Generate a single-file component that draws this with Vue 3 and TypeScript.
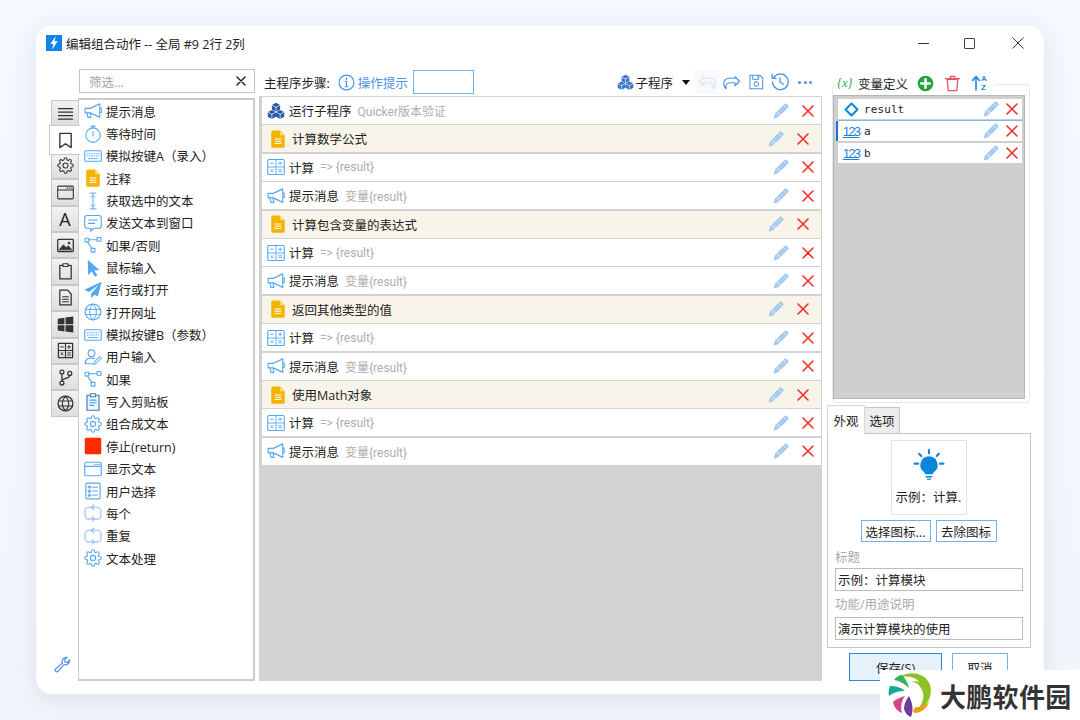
<script setup lang="ts">
import { h } from 'vue'

type P = [string, string?, string?, number?]
const CUR = 'currentColor'
const gear = 'M19.4 15a1.65 1.65 0 0 0 .33 1.82l.06.06a2 2 0 0 1 0 2.83 2 2 0 0 1-2.83 0l-.06-.06a1.65 1.65 0 0 0-1.82-.33 1.65 1.65 0 0 0-1 1.51V21a2 2 0 0 1-2 2 2 2 0 0 1-2-2v-.09A1.65 1.65 0 0 0 9 19.4a1.65 1.65 0 0 0-1.82.33l-.06.06a2 2 0 0 1-2.83 0 2 2 0 0 1 0-2.83l.06-.06a1.65 1.65 0 0 0 .33-1.82 1.65 1.65 0 0 0-1.51-1H3a2 2 0 0 1-2-2 2 2 0 0 1 2-2h.09A1.65 1.65 0 0 0 4.6 9a1.65 1.65 0 0 0-.33-1.82l-.06-.06a2 2 0 0 1 0-2.83 2 2 0 0 1 2.83 0l.06.06a1.65 1.65 0 0 0 1.82.33H9a1.65 1.65 0 0 0 1-1.51V3a2 2 0 0 1 2-2 2 2 0 0 1 2 2v.09a1.65 1.65 0 0 0 1 1.51 1.65 1.65 0 0 0 1.82-.33l.06-.06a2 2 0 0 1 2.83 0 2 2 0 0 1 0 2.83l-.06.06a1.65 1.65 0 0 0-.33 1.82V9a1.65 1.65 0 0 0 1.51 1H21a2 2 0 0 1 2 2 2 2 0 0 1-2 2h-.09a1.65 1.65 0 0 0-1.51 1z'
const icons: Record<string, P[]> = {
  megaphone: [['M1.5 8.5h7L21 2.5v18L8.5 14.5h-7z'], ['M4 14.5l1.2 6h4l-1-5.5'], ['M21 8h2v6h-2']],
  timer: [['M12 13.5m-9.6 0a9.6 9.6 0 1 0 19.2 0a9.6 9.6 0 1 0-19.2 0z'], ['M12 9v5.5'], ['M9.5 1.5h5'], ['M12 1.5v2.5']],
  keyboard: [['M2.5 5h19a1.5 1.5 0 0 1 1.5 1.5v11a1.5 1.5 0 0 1-1.5 1.5h-19A1.5 1.5 0 0 1 1 17.5v-11A1.5 1.5 0 0 1 2.5 5z'], ['M4 9h1M7 9h1M10 9h1M13 9h1M16 9h1M19 9h1M4.5 12h1M7.5 12h1M10.5 12h1M13.5 12h1M16.5 12h1M19.5 12h.5M6 15.5h12', CUR, 'none', 1.2]],
  note: [['M5 0.5h10l6 6.5v15a1.5 1.5 0 0 1-1.5 1.5h-15A1.5 1.5 0 0 1 3 22V2.5a2 2 0 0 1 2-2z', 'none', '#f5b301'], ['M15 0.5l6 6.5h-6z', 'none', '#fbdc86'], ['M8 12h8M8 15h8M8 18h8', '#fff', 'none', 1.4]],
  ibeam: [['M8 1.5h8M8 22.5h8M12 2v20M9.5 7L12 4.5 14.5 7M9.5 17l2.5 2.5 2.5-2.5', CUR, 'none', 1.3]],
  chat: [['M4 2h16a3 3 0 0 1 3 3v11a3 3 0 0 1-3 3h-7l-4 4v-4H4a3 3 0 0 1-3-3V5a3 3 0 0 1 3-3z'], ['M6 8h12M6 12.5h8']],
  branch: [['M1.5 3h5v5h-5zM17.5 2h5v5h-5zM9.5 16.5h5v5h-5z'], ['M6.5 5h11M4.5 8l6 8.5']],
  cursor: [['M5 1l15.5 13.5-7 .8 4.5 6.5-3.5 1.7-4-7-5 4.8z', 'none', CUR]],
  plane: [['M23.5 1L.5 11.5l6 3.2L20 5 9.5 16.5V23l4.2-4.8 4.8 2.3z', 'none', CUR]],
  globe: [['M12 1.5a10.5 10.5 0 1 0 0 21 10.5 10.5 0 0 0 0-21z'], ['M12 1.5c-6 6-6 15 0 21M12 1.5c6 6 6 15 0 21M2 8.5h20M2 15.5h20', CUR, 'none', 1.3]],
  user: [['M10 2.5a4.5 4.5 0 1 0 0 9 4.5 4.5 0 0 0 0-9z'], ['M1.5 21c0-5 3-7.5 8-7.5 1.5 0 3 .3 4 .8M1.5 21h10'], ['M13 21.5l1-3.5 7-7 2.5 2.5-7 7z', CUR, '#cfe5fa', 1.2]],
  clip: [['M4 3h16v20H4z', '#3f78b5', '#eef6fd', 1.5], ['M8.5 1h7v4h-7z', '#3f78b5', '#fff', 1.4], ['M8 9.5h8M8 13h8M8 16.5h5', '#4aa3ee', 'none', 1.6]],
  gear: [[gear, CUR, 'none', 1.5], ['M15.5 12a3.5 3.5 0 1 1-7 0 3.5 3.5 0 0 1 7 0z', CUR, 'none', 1.5]],
  stop: [['M3 1h18a2 2 0 0 1 2 2v18a2 2 0 0 1-2 2H3a2 2 0 0 1-2-2V3a2 2 0 0 1 2-2z', 'none', '#ff2a00']],
  window: [['M2.5 3h19A1.5 1.5 0 0 1 23 4.5v15a1.5 1.5 0 0 1-1.5 1.5h-19A1.5 1.5 0 0 1 1 19.5v-15A1.5 1.5 0 0 1 2.5 3z'], ['M1 8.5h22'], ['M14 5.8h1M17 5.8h1M20 5.8h1', CUR, 'none', 1.4]],
  choice: [['M4 1.5h16a1.5 1.5 0 0 1 1.5 1.5v18a1.5 1.5 0 0 1-1.5 1.5H4A1.5 1.5 0 0 1 2.5 21V3A1.5 1.5 0 0 1 4 1.5z'], ['M6 5.5h2.5v2.5H6zM6 11h2.5v2.5H6zM6 16.5h2.5V19H6z', CUR, CUR, 1], ['M11 7h7M11 12h7M11 17.5h7', CUR, 'none', 1.3]],
  loop: [['M9 4.5H6a4.5 4.5 0 0 0-4.5 4.5v6.5A4.5 4.5 0 0 0 6 20h7', CUR, 'none', 2.4], ['M15 20h3a4.5 4.5 0 0 0 4.5-4.5V9A4.5 4.5 0 0 0 18 4.5h-7', CUR, 'none', 2.4], ['M13 1.5l-3 3 3 3M11 17l3 3-3 3', '#7fb4ea', 'none', 1.4]],
  calc: [['M2.5 2h19A1.5 1.5 0 0 1 23 3.5v17a1.5 1.5 0 0 1-1.5 1.5h-19A1.5 1.5 0 0 1 1 20.5v-17A1.5 1.5 0 0 1 2.5 2z'], ['M1 12h22M12 2v20', CUR, 'none', 1.2], ['M4.5 7h4M15.5 7h4M17.5 5v4M5 15.5l3 3M8 15.5l-3 3M15.5 15.7h4M15.5 18.3h4', CUR, 'none', 1.2]],
  cubes: [['M12 1l5.5 3v6L12 13 6.5 10V4z', 'none', CUR], ['M6.5 10.5L12 13.5v6L6.5 22.5 1 19.5v-6z', 'none', CUR], ['M17.5 10.5l5.5 3v6l-5.5 3-5.5-3v-6z', 'none', CUR], ['M6.5 4.2L12 7.2l5.5-3M12 7.2v5.5M1 13.5l5.5 3 5.5-3M6.5 16.5v6M12 13.5l5.5 3 5.5-3M17.5 16.5v6', '#fff', 'none', .9]],
  pencil: [['M2 22l1.8-6.3L17.8 1.8a1.6 1.6 0 0 1 2.3 0l2.1 2.1a1.6 1.6 0 0 1 0 2.3L8.3 20.2z', '#7fb4ea', '#a9cef3', 1], ['M5 14.5l4.5 4.5M7 13l4.5 4.5M16 3.5l4.5 4.5', '#e6f1fc', 'none', 1]],
  cross: [['M2 2l20 20M22 2L2 22', '#f12f28', 'none', 3.2]],
  menu: [['M2 5h20M2 10h20M2 15h20M2 20h20', CUR, 'none', 1.8]],
  bookmark: [['M4 2h16v20l-8-5.5L4 22z', CUR, 'none', 1.9]],
  image: [['M2 3.5h20a1 1 0 0 1 1 1v15a1 1 0 0 1-1 1H2a1 1 0 0 1-1-1v-15a1 1 0 0 1 1-1z', CUR, 'none', 1.8], ['M3 18l6-7 4 4 3-2.5 5 5.5z', CUR, CUR, 1], ['M17 7a1.6 1.6 0 1 0 0 3.2 1.6 1.6 0 0 0 0-3.2z', CUR, CUR, .5]],
  clipd: [['M4 3.5h16v19H4z', CUR, 'none', 1.8], ['M8.5 1h7v4h-7z', CUR, '#eee', 1.6]],
  doc: [['M4 1.5h11l5 5.5v15.5H4z', CUR, 'none', 1.8], ['M8 11h8M8 14.5h8M8 18h8', CUR, 'none', 1.6]],
  win: [['M1 4l9.5-1.5v9H1zM12 2.2L23 .6v10.9H12zM1 13h9.5v9L1 20.5zM12 13h11v10.4L12 21.8z', 'none', CUR]],
  calcd: [['M2 2h20v20H2z', CUR, 'none', 1.8], ['M2 12h20M12 2v20', CUR, 'none', 1.6], ['M5 7h4M15 7h4M17 5v4M5.5 15l3 3M8.5 15l-3 3M15 15.5h4M15 18.5h4', CUR, 'none', 1.4]],
  git: [['M7 1.5a2.8 2.8 0 1 0 0 5.6 2.8 2.8 0 0 0 0-5.6zM7 17a2.8 2.8 0 1 0 0 5.6A2.8 2.8 0 0 0 7 17zM18 3.5a2.8 2.8 0 1 0 0 5.6 2.8 2.8 0 0 0 0-5.6z', CUR, 'none', 1.8], ['M7 7v10M18 9c0 5-11 3.5-11 8', CUR, 'none', 1.8]],
  globed: [['M12 1.5a10.5 10.5 0 1 0 0 21 10.5 10.5 0 0 0 0-21z', CUR, 'none', 1.8], ['M12 1.5c-6 6-6 15 0 21M12 1.5c6 6 6 15 0 21M2 8.5h20M2 15.5h20', CUR, 'none', 1.5]],
  wrench: [['M22 6.5a6 6 0 0 1-8 5.6L5.8 21.6a2.4 2.4 0 0 1-3.4-3.4L11.9 9.9A6 6 0 0 1 18.5 2L15 5.5l.6 3 3 .6 3.4-3.5z', CUR, 'none', 1.8]],
  info: [['M12 1.5a10.5 10.5 0 1 0 0 21 10.5 10.5 0 0 0 0-21z', CUR, 'none', 1.6], ['M12 10.5V18M10 18h4M10.5 10.5H12', CUR, 'none', 1.7], ['M12 6v1.8', CUR, 'none', 2]],
  undo: [['M8 5L2 11l6 6v-4h7a5 5 0 0 1 5 5v3c3-3 3-5 3-7a7 7 0 0 0-7-7H8z', CUR, 'none', 1.5]],
  redo: [['M16 5l6 6-6 6v-4H9a5 5 0 0 0-5 5v3c-3-3-3-5-3-7a7 7 0 0 1 7-7h8z', CUR, 'none', 1.6]],
  save: [['M3 2h15l4 4v16H3z', CUR, 'none', 1.6], ['M7 2v6h9V2M15 4v2', CUR, 'none', 1.5], ['M12.5 11.5a3.5 3.5 0 1 0 0 7 3.5 3.5 0 0 0 0-7z', CUR, 'none', 1.5]],
  history: [['M4 5.5A10.5 10.5 0 1 1 2 12', CUR, 'none', 1.8], ['M1.5 2v5h5M12 6.5V12l4.5 3', CUR, 'none', 1.8]],
  plus: [['M12 1a11 11 0 1 0 0 22 11 11 0 0 0 0-22z', 'none', '#22a03c'], ['M12 6v12M6 12h12', '#fff', 'none', 3.6]],
  trash: [['M4.5 6h15l-1.4 16H5.9z', '#e8525e', 'none', 1.8], ['M2 5h20M9 5V2h6v3', '#e8525e', 'none', 1.8]],
  sort: [['M12 22V3M7 8l5-5.5L17 8', '#2090ee', 'none', 2.6]],
  diamond: [['M12 2.5L21.5 12 12 21.5 2.5 12z', '#1488e0', 'none', 3.4]],
  bulb: [['M12 5.5a6.5 6.5 0 0 0-4 11.6c.7.6 1 1.2 1 1.9h6c0-.7.3-1.3 1-1.9a6.5 6.5 0 0 0-4-11.6z', 'none', '#0c86dc'], ['M9.5 20.2h5v1.2h-5zM10.5 22.2h3V23h-3z', 'none', '#0c86dc'], ['M12 .8v2.4M4.6 3.6l1.6 1.7M19.4 3.6l-1.6 1.7M1.2 11h2.6M20.2 11h2.6', '#0c86dc', 'none', 1.6]],
  bolt: [['M14.5 2L6.5 13.5h4.5L9 22l8.5-12.5H13z', 'none', '#fff']],
  close: [['M4 4l16 16M20 4L4 20', '#111', 'none', 2.6]],
}

const Icon = (props: { name: string; size?: number }) =>
  h(
    'svg',
    { viewBox: '0 0 24 24', width: props.size ?? 18, height: props.size ?? 18, class: 'ico' },
    icons[props.name].map(([d, s, f, w]) =>
      h('path', {
        d,
        stroke: s ?? CUR,
        fill: f ?? 'none',
        'stroke-width': w ?? 1.5,
        'stroke-linecap': 'round',
        'stroke-linejoin': 'round',
      }),
    ),
  )
Icon.props = ['name', 'size']

const tabs = [
  { icon: 'menu' }, { icon: 'bookmark', active: true }, { icon: 'gear' }, { icon: 'window' },
  { text: 'A' }, { icon: 'image' }, { icon: 'clipd' }, { icon: 'doc' },
  { icon: 'win' }, { icon: 'calcd' }, { icon: 'git' }, { icon: 'globed' },
]

const actions = [
  ['megaphone', '提示消息', 'sky'], ['timer', '等待时间', 'sky'], ['keyboard', '模拟按键A（录入）', 'sky'],
  ['note', '注释', 'sky'], ['ibeam', '获取选中的文本', 'sky'], ['chat', '发送文本到窗口', 'sky'],
  ['branch', '如果/否则', 'sky'], ['cursor', '鼠标输入', 'sky'], ['plane', '运行或打开', 'sky'],
  ['globe', '打开网址', 'sky'], ['keyboard', '模拟按键B（参数）', 'sky'], ['user', '用户输入', 'sky'],
  ['branch', '如果', 'sky'], ['clip', '写入剪贴板', 'sky'], ['gear', '组合成文本', 'sky'],
  ['stop', '停止(return)', 'sky'], ['window', '显示文本', 'sky'], ['choice', '用户选择', 'sky'],
  ['loop', '每个', 'pale'], ['loop', '重复', 'pale'], ['gear', '文本处理', 'sky'],
]

const calcRow = { icon: 'calc', title: '计算', sub: '=> {result}', tone: 'sky' }
const msgRow = { icon: 'megaphone', title: '提示消息', sub: '变量{result}', tone: 'sky' }
const note = (title: string) => ({ icon: 'note', title, sub: '', tone: 'sky', comment: true })
const steps: { icon: string; title: string; sub: string; tone: string; comment?: boolean }[] = [
  { icon: 'cubes', title: '运行子程序', sub: 'Quicker版本验证', tone: 'navy' },
  note('计算数学公式'), calcRow, msgRow,
  note('计算包含变量的表达式'), calcRow, msgRow,
  note('返回其他类型的值'), calcRow, msgRow,
  note('使用Math对象'), calcRow, msgRow,
]
</script>

<template>
  <div class="page">
    <div class="window">
      <header class="titlebar">
        <span class="app-icon"><Icon name="bolt" :size="16" /></span>
        <span class="title">编辑组合动作 -- 全局 #9 2行 2列</span>
        <div class="winbtns">
          <i class="min"></i>
          <i class="max"></i>
          <svg class="cls" viewBox="0 0 12 12" width="12" height="12"><path d="M.5.5l11 11M11.5.5l-11 11" stroke="#333" fill="none" /></svg>
        </div>
      </header>

      <main class="body">
        <nav class="tabs">
          <div v-for="(t, i) in tabs" :key="i" class="tab" :class="{ active: t.active }">
            <Icon v-if="t.icon" :name="t.icon" :size="17" />
            <span v-else class="tab-a">{{ t.text }}</span>
          </div>
          <div class="spacer"></div>
          <Icon class="wrench" name="wrench" :size="17" />
        </nav>

        <section class="toolbox">
          <div class="filter">
            <span>筛选...</span>
            <Icon name="close" :size="12" />
          </div>
          <ul class="actions">
            <li v-for="a in actions" :key="a[1]" class="action">
              <Icon :class="a[2]" :name="a[0]" :size="18" />
              <span>{{ a[1] }}</span>
            </li>
          </ul>
        </section>

        <section class="main">
          <div class="main-head">
            <span class="main-label">主程序步骤:</span>
            <Icon class="blue info" name="info" :size="17" />
            <span class="hint">操作提示</span>
            <div class="search"></div>
            <div class="spacer"></div>
            <Icon class="royal" name="cubes" :size="17" />
            <span class="sub-label">子程序</span>
            <span class="caret"></span>
            <span class="undo-wrap"><Icon class="faded" name="undo" :size="18" /></span>
            <Icon class="blue" name="redo" :size="18" />
            <Icon class="blue" name="save" :size="16" />
            <Icon class="blue" name="history" :size="18" />
            <span class="dots"><i></i><i></i><i></i></span>
          </div>
          <div class="steps">
            <div v-for="(s, i) in steps" :key="i" class="step" :class="{ comment: s.comment }">
              <Icon :class="s.tone" :name="s.icon" :size="18" />
              <span class="step-title">{{ s.title }}</span>
              <span v-if="s.sub" class="step-sub">{{ s.sub }}</span>
              <div class="spacer"></div>
              <Icon name="pencil" :size="16" />
              <Icon class="x" name="cross" :size="12" />
            </div>
          </div>
        </section>

        <aside class="side">
          <div class="group">
            <div class="legend">
              <span class="braces">{x}</span>
              <span class="legend-text">变量定义</span>
              <Icon name="plus" :size="17" />
              <Icon name="trash" :size="17" />
              <span class="sort">
                <Icon name="sort" :size="16" />
                <span class="az"><b>A</b><b>Z</b></span>
              </span>
            </div>
            <div class="vars">
              <div class="var">
                <span class="var-ic"><Icon name="diamond" :size="15" /></span>
                <span class="var-name">result</span>
                <div class="spacer"></div>
                <Icon name="pencil" :size="16" />
                <Icon class="x" name="cross" :size="12" />
              </div>
              <div class="var selected">
                <span class="var-ic num">123</span>
                <span class="var-name">a</span>
                <div class="spacer"></div>
                <Icon name="pencil" :size="16" />
                <Icon class="x" name="cross" :size="12" />
              </div>
              <div class="var">
                <span class="var-ic num">123</span>
                <span class="var-name">b</span>
                <div class="spacer"></div>
                <Icon name="pencil" :size="16" />
                <Icon class="x" name="cross" :size="12" />
              </div>
            </div>
          </div>

          <div class="pane-tabs">
            <span class="pane-tab on">外观</span>
            <span class="pane-tab">选项</span>
          </div>
          <div class="pane">
            <div class="card">
              <Icon name="bulb" :size="32" />
              <span>示例：计算.</span>
            </div>
            <div class="icon-btns">
              <button class="wide">选择图标...</button>
              <button class="narrow">去除图标</button>
            </div>
            <label class="lab first">标题</label>
            <div class="field">示例：计算模块</div>
            <label class="lab">功能/用途说明</label>
            <div class="field">演示计算模块的使用</div>
          </div>
          <div class="foot">
            <button class="save">保存(S)</button>
            <button class="cancel">取消</button>
          </div>
        </aside>
      </main>
    </div>

    <div class="watermark">
      <svg viewBox="0 0 50 50" width="50" height="50">
        <path d="M14 7C24 0 40 3 44 15c3 10-2 21-12 24 5-6 7-13 4-19-2-5-6-8-10-8 3-1 6-1 7 1 0-4-9-8-19-6z" fill="#8cc221" />
        <path d="M30 37c5 0 10-2 13-6-1 6-7 12-14 12-2 0-3-3 1-6z" fill="#f09a1a" />
        <path d="M23 26c3 6 5 13 2 21-3-1-6-4-7-8 0-5 2-9 5-13z" fill="#6a3f9b" />
        <path d="M19 26c-3 4-5 10-3 17-5-2-8-6-9-11 3-3 8-5 12-6z" fill="#d5408f" />
        <path d="M19 21c-5 0-11 1-16 5-1-4 0-7 1-10 5 0 11 1 15 5z" fill="#18a89a" />
        <path d="M23 18C19 14 14 11 8 10c2-3 5-5 8-5 3 3 6 8 7 13z" fill="#35b45a" />
      </svg>
      <span>大鹏软件园</span>
    </div>
  </div>
</template>

<style>
html, body { margin: 0; background: #f4f7fd; }
</style>

<style scoped>
.page {
  position: relative;
  width: 1080px;
  height: 720px;
  overflow: hidden;
  padding: 26px 0 0 36px;
  box-sizing: border-box;
  background: linear-gradient(180deg, #f5f8fe 0%, #f2f5fb 100%);
  font-family: "Open Sans", "Noto Sans CJK SC", sans-serif;
  font-size: 12.5px;
  color: #222;
}
.ico { display: block; flex: none; }
.spacer { flex: 1; }
.sky { color: #56a8ee; }
.pale { color: #bcd8f4; }
.navy { color: #2a5aa8; }
.royal { color: #3a76c8; }
.blue { color: #4c93e6; }
.faded { color: #d5e3f5; }

.window {
  width: 1008px;
  height: 668px;
  background: #fff;
  border-radius: 16px;
  box-shadow: 0 6px 24px rgba(70, 90, 130, 0.13);
  display: flex;
  flex-direction: column;
}
.titlebar {
  height: 34px;
  display: flex;
  align-items: center;
  padding: 0 20px 0 10px;
  flex: none;
}
.app-icon {
  width: 16px;
  height: 16px;
  background: #0f84ee;
  margin-right: 4px;
}
.title { font-size: 12.5px; }
.winbtns { margin-left: auto; display: flex; align-items: center; }
.min { display: block; width: 11px; height: 1px; background: #333; margin-right: 35px; }
.max { display: block; width: 9px; height: 9px; border: 1px solid #444; margin-right: 37px; border-radius: 1px; }

.body { flex: 1; min-height: 0; display: flex; padding: 9px 13px 13px 13px; }

.tabs {
  width: 29px;
  flex: none;
  display: flex;
  flex-direction: column;
  padding-top: 31px;
  position: relative;
  z-index: 1;
}
.tab {
  height: 26.4px;
  margin-left: 2px;
  box-sizing: border-box;
  display: flex;
  align-items: center;
  justify-content: center;
  color: #333;
  background: linear-gradient(180deg, #f2f2f2, #dedede);
  border: 1px solid #c8c8c8;
  border-right: none;
}
.tab.active {
  height: 30px;
  margin: -1px -2px -2.6px 0;
  background: #fff;
  position: relative;
  z-index: 2;
}
.tab-a { font-size: 18px; line-height: 1; font-family: "Open Sans", sans-serif; color: #222; }
.wrench { color: #5a8fe8; margin: 0 0 8px 5px; }

.toolbox { width: 177px; flex: none; display: flex; flex-direction: column; }
.filter {
  height: 24px;
  box-sizing: border-box;
  margin-left: 1px;
  border: 1.5px solid #c4c4c4;
  display: flex;
  align-items: center;
  justify-content: space-between;
  padding: 0 7px 0 9px;
  color: #a4a4a4;
  flex: none;
}
.actions {
  list-style: none;
  margin: 5px 0 0;
  padding: 0 0 0 5px;
  flex: 1;
  border: 2px solid #cbcbcb;
  border-left-width: 1.5px;
}
.action { height: 22.35px; display: flex; align-items: center; gap: 3px; }
.action .ico { margin-right: 1px; }

.main { width: 563px; margin-left: 4px; flex: none; display: flex; flex-direction: column; }
.main-head { height: 27px; box-sizing: border-box; flex: none; display: flex; align-items: center; padding: 0 10px 1px 5px; }
.main-label { margin-right: 8px; }
.hint { color: #4c93e6; margin: 0 5px 0 3px; }
.search { width: 59px; height: 22px; border: 1.5px solid #6cb2ee; }
.sub-label { margin-left: 1px; }
.caret {
  width: 0;
  height: 0;
  margin: 0 5px 0 9px;
  border-left: 4.5px solid transparent;
  border-right: 4.5px solid transparent;
  border-top: 5px solid #111;
}
.undo-wrap { background: #f8f9fc; padding: 3px; margin-right: 4px; }
.main-head > svg + svg { margin-left: 7px; }
.dots { display: flex; gap: 2.5px; margin-left: 9px; }
.dots i { display: block; width: 3px; height: 3px; border-radius: 50%; background: #4c93e6; }

.steps {
  flex: 1;
  background: #d2d2d2;
  padding: 1px 1px 0 3px;
  display: flex;
  flex-direction: column;
  gap: 1.42px;
}
.step {
  height: 27px;
  flex: none;
  display: flex;
  align-items: center;
  background: #fff;
  padding: 0 7px 0 5px;
}
.step-title { margin-left: 4px; }
.step-sub { margin-left: 6px; color: #aeaeae; font-size: 12px; font-family: Roboto, "Noto Sans CJK SC", sans-serif; }
.step .x { margin-left: 13px; }
.step.comment { background: #f8f4e9; padding: 0 12px 0 7px; }
.step.comment .step-title { margin-left: 5px; }

.side { width: 204px; margin-left: 5px; flex: none; display: flex; flex-direction: column; }
.group {
  height: 319px;
  box-sizing: border-box;
  margin: 15px 1px 0 5px;
  border: 1px solid #e2eaf1;
  border-radius: 4px;
  flex: none;
}
.legend {
  height: 20px;
  margin: -12px 0 0 0;
  width: 163px;
  background: #fff;
  display: flex;
  align-items: center;
  padding-left: 4px;
  box-sizing: border-box;
}
.braces { font-family: "Liberation Serif", serif; font-style: italic; font-size: 12.5px; color: #2aa84a; width: 21px; white-space: nowrap; flex: none; }
.legend-text { margin-right: 9px; }
.legend > svg + svg { margin-left: 10px; }
.sort { display: flex; align-items: center; margin-left: 7px; }
.az { display: flex; flex-direction: column; margin-left: -3px; font-size: 8px; line-height: 9.5px; color: #2090ee; font-family: "Liberation Sans", sans-serif; }
.az b { display: block; }
.vars {
  height: 304px;
  box-sizing: border-box;
  width: 192px;
  margin-top: 2px;
  background: #cfcfcf;
  border: 1px solid #b6b6b6;
  padding: 3px 2px 0 4px;
  display: flex;
  flex-direction: column;
  gap: 2px;
}
.var { height: 20px; background: #fff; display: flex; align-items: center; padding-right: 4px; }
.var .x { margin-left: 7px; }
.var-ic { width: 26px; display: flex; justify-content: center; flex: none; }
.num {
  color: #1a80d8;
  text-decoration: underline;
  font-family: "Liberation Sans", sans-serif;
  font-size: 13px;
  letter-spacing: -1.7px;
}
.var-name { font-family: "DejaVu Sans Mono", monospace; font-size: 11px; letter-spacing: .1px; }
.var.selected { box-shadow: -2px 0 0 #1a6fd8, 0 -1px 0 #7db6ec; }

.pane-tabs { height: 28px; margin-top: 2px; flex: none; display: flex; align-items: flex-end; position: relative; z-index: 1; }
.pane-tab {
  height: 26px;
  width: 35px;
  box-sizing: border-box;
  display: flex;
  align-items: center;
  justify-content: center;
  background: #ededed;
  border: 1px solid #c6c6c6;
  border-left: none;
  border-bottom: none;
}
.pane-tab.on { height: 29px; width: 38px; background: #fff; margin-bottom: -1px; border-left: 1px solid #d8d8d8; border-color: #d8d8d8; }
.pane {
  height: 215px;
  box-sizing: border-box;
  flex: none;
  border: 1px solid #c6c6c6;
  padding: 6px 7px 0;
  display: flex;
  flex-direction: column;
}
.card {
  width: 76px;
  height: 75px;
  box-sizing: border-box;
  align-self: center;
  margin-right: 1px;
  border: 1px solid #e2e2e2;
  display: flex;
  flex-direction: column;
  align-items: center;
  padding-top: 8px;
  gap: 6px;
  flex: none;
  white-space: nowrap;
}
.icon-btns { display: flex; justify-content: center; gap: 5px; margin-top: 5px; margin-right: 1px; flex: none; }
button {
  font: inherit;
  color: #222;
  background: #fff;
  border: 1.5px solid #6cb2ee;
  padding: 0;
  border-radius: 0;
}
.wide { width: 70px; height: 22px; }
.narrow { width: 61px; height: 22px; }
.lab { display: flex; align-items: center; color: #aaa; height: 26px; box-sizing: border-box; padding-bottom: 2px; flex: none; }
.lab.first { margin-top: 5px; height: 21px; padding-bottom: 3px; }
.field {
  height: 23px;
  box-sizing: border-box;
  border: 1.5px solid #bcbcbc;
  padding-left: 2px;
  display: flex;
  align-items: center;
  flex: none;
}
.foot { display: flex; gap: 10px; margin: 5px 0 0 22px; }
.save { width: 93px; height: 28px; background: #e5f2fc; border-color: #2a88dc; }
.cancel { width: 56px; height: 28px; }

.watermark {
  position: absolute;
  left: 880px;
  top: 670px;
  width: 200px;
  height: 50px;
  background: #fff;
  display: flex;
  align-items: center;
  padding-left: 6px;
  box-sizing: border-box;
  font-family: "Noto Sans CJK SC", sans-serif;
  font-weight: 700;
  font-size: 26px;
  color: #333;
  white-space: nowrap;
}
.watermark span { margin-left: 4px; letter-spacing: .3px; }
</style>
